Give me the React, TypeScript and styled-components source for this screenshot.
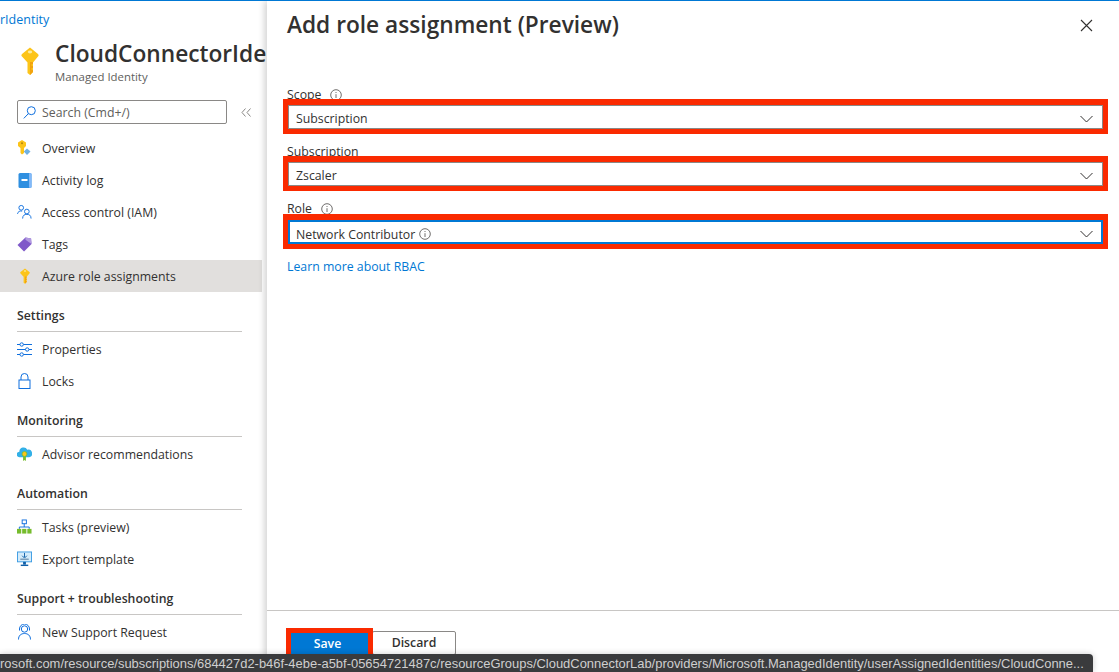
import styled, { createGlobalStyle } from 'styled-components'

const GlobalStyle = createGlobalStyle`
  html, body { margin: 0; padding: 0; background: #fff; }
  #root { height: 672px; }
`
const Page = styled.div`
  position: relative;
  display: flex;
  width: 1119px;
  height: 672px;
  overflow: hidden;
  border-top: 1px solid #0078d4;
  box-sizing: border-box;
  font-family: 'Open Sans', 'Noto Sans', sans-serif;
  color: #323130;
`
const Sidebar = styled.aside`
  width: 267px;
  flex: none;
  overflow: hidden;
  white-space: nowrap;
`
const Crumb = styled.div`
  height: 18px;
  margin-top: 10px;
  font-size: 12.5px;
  line-height: 18px;
  color: #0078d4;
`
const Resource = styled.header`
  display: flex;
  align-items: flex-start;
  gap: 16px;
  padding: 10px 0 0 21px;
  svg {
    flex: none;
    margin-top: 8px;
  }
`
const ResourceText = styled.div`
  display: flex;
  flex-direction: column;
`
const ResourceName = styled.h1`
  margin: 0;
  font-size: 22.7px;
  line-height: 29px;
  font-weight: 600;
  color: #323130;
`
const ResourceKind = styled.span`
  font-size: 11.4px;
  line-height: 18px;
  color: #605e5c;
`
const SearchRow = styled.div`
  display: flex;
  align-items: center;
  gap: 14px;
  padding: 14px 0 8px 17px;
`
const SearchBox = styled.div`
  display: flex;
  align-items: center;
  gap: 6px;
  box-sizing: border-box;
  width: 210px;
  height: 24px;
  padding-left: 5px;
  border: 1px solid #8a8886;
  border-radius: 2px;
  font-size: 12.3px;
  color: #605e5c;
`
const Collapse = styled.span`
  display: flex;
  color: #8a8886;
`
const NavRow = styled.div<{ $active?: boolean }>`
  display: flex;
  align-items: center;
  gap: 10px;
  width: 262px;
  height: 32px;
  box-sizing: border-box;
  padding-left: 17px;
  font-size: 12.3px;
  color: #323130;
  background: ${p => (p.$active ? '#e1dfdd' : 'transparent')};
`
const IconSlot = styled.span`
  display: flex;
  align-items: center;
  justify-content: center;
  width: 15px;
  height: 16px;
  flex: none;
`
const GroupTitle = styled.h2`
  box-sizing: border-box;
  width: 225px;
  height: 29px;
  margin: 11px 0 1px 17px;
  border-bottom: 1px solid #c8c6c4;
  font-size: 12.3px;
  line-height: 26px;
  font-weight: 600;
  color: #323130;
`
const Panel = styled.main`
  flex: 1;
  display: flex;
  flex-direction: column;
  min-width: 0;
  box-shadow: -3px 0 6px rgba(0, 0, 0, 0.16);
  background: #fff;
  z-index: 1;
`
const PanelHead = styled.div`
  display: flex;
  align-items: center;
  justify-content: space-between;
  height: 48px;
  padding: 0 26px 0 20px;
`
const PanelTitle = styled.h2`
  margin: 0;
  font-size: 22.7px;
  line-height: 48px;
  font-weight: 600;
  color: #323130;
`
const Form = styled.div`
  flex: 1;
  display: flex;
  flex-direction: column;
  padding: 33px 11px 0 16px;
`
const FieldLabel = styled.label<{ $top: number }>`
  display: flex;
  align-items: flex-start;
  gap: 9px;
  box-sizing: border-box;
  height: 17px;
  padding: ${p => p.$top}px 0 0 4px;
  font-size: 12.3px;
  line-height: 17px;
  color: #323130;
  svg {
    margin-top: 3px;
  }
`
const Highlight = styled.div<{ $gap: number }>`
  box-sizing: border-box;
  height: 35px;
  margin-bottom: ${p => p.$gap}px;
  border: 5px solid #fa2a00;
  border-top-width: 6px;
  outline: 1px solid rgba(250, 42, 0, 0.4);
  outline-offset: -1px;
`
const Select = styled.div<{ $focused?: boolean }>`
  display: flex;
  align-items: center;
  justify-content: space-between;
  box-sizing: border-box;
  height: 100%;
  padding: ${p => (p.$focused ? '4px' : '3px')} 9px 0 7px;
  border: ${p => (p.$focused ? '1px solid #0078d4' : '1px solid #8a8886')};
  box-shadow: ${p => (p.$focused ? 'inset 0 0 0 1px #0078d4' : 'none')};
  font-size: 12.3px;
  color: #323130;
`
const SelectValue = styled.span`
  display: flex;
  align-items: center;
  gap: 4px;
`
const LearnLink = styled.a`
  margin: 4px 0 0 4px;
  font-size: 12.3px;
  line-height: 18px;
  color: #0078d4;
`
const Footer = styled.footer`
  display: flex;
  align-items: flex-start;
  height: 62px;
  box-sizing: border-box;
  padding: 17px 0 0 19px;
  border-top: 1px solid #c8c6c4;
`
const SaveFrame = styled.div`
  position: relative;
  z-index: 3;
  box-sizing: border-box;
  width: 87px;
  height: 32px;
  border: 5px solid #fa2a00;
`
const SaveButton = styled.button`
  display: block;
  width: 100%;
  height: 100%;
  padding: 0 4px 2px 0;
  border: 0;
  background: #0078d4;
  color: #fff;
  font: 600 12.3px 'Open Sans', sans-serif;
`
const DiscardButton = styled.button`
  width: 84px;
  height: 24px;
  margin: 3px 0 0 -1px;
  padding: 0 0 1px;
  border: 1px solid #8a8886;
  border-radius: 2px;
  background: #fff;
  color: #323130;
  font: 600 12.3px 'Open Sans', sans-serif;
`
const StatusBar = styled.div`
  position: absolute;
  left: 0;
  bottom: 0;
  z-index: 2;
  box-sizing: border-box;
  width: 1093px;
  height: 18px;
  padding-right: 4px;
  border-top-right-radius: 4px;
  background: #3a3b3d;
  box-shadow: 0 0 6px rgba(0, 0, 0, 0.2);
  color: #cfcfcf;
  font-family: 'Liberation Sans', Arial, sans-serif;
  font-size: 12.95px;
  line-height: 20px;
  white-space: nowrap;
  overflow: hidden;
`

const KeyIcon = ({ width = 18, height = 28 }: { width?: number; height?: number }) => (
  <svg width={width} height={height} viewBox="0 0 18 28">
    <path d="M9 0.5 17 7Q18.2 8.3 17 9.6L12 15.5V25L9 28 6.5 26V15.5L1 9.6Q-0.2 8.3 1 7Z" fill="#fcc419" />
    <path d="M9 15H12V17H10.5V19H12V21H10.5V23H12V25L9 28Z" fill="#f2a30f" />
    <ellipse cx="9" cy="5" rx="2.2" ry="1.4" fill="#fdeb9c" />
  </svg>
)
const OverviewIcon = () => (
  <svg width="15" height="16" viewBox="0 0 15 16">
    <path d="M5 0 9 2.5V6L7 8V13L5 14.5 3.5 13V8L1 6V2.5Z" fill="#fcc419" />
    <circle cx="5" cy="3.2" r="1" fill="#b8860b" />
    <path d="M10 8.5 13.5 11.5 10 15 6.8 11.5Z" fill="#6fb1e4" />
  </svg>
)
const LogIcon = () => (
  <svg width="14" height="15" viewBox="0 0 14 15">
    <rect x="0.5" y="0" width="13" height="15" rx="1.5" fill="#2f8fe0" />
    <rect x="11" y="0" width="2.5" height="15" rx="1" fill="#83b9f9" />
    <rect x="3.5" y="6" width="6" height="2" fill="#fff" />
  </svg>
)
const AccessIcon = () => (
  <svg width="16" height="16" viewBox="0 0 16 16" fill="none" stroke="#0f6fde" strokeWidth="1">
    <circle cx="4.5" cy="3.5" r="2.5" />
    <path d="M0.5 10C1 7.5 3 6.5 5.5 7" />
    <circle cx="10.5" cy="7.5" r="2.5" />
    <path d="M6 15C6 11.5 8 10.5 10.5 10.5S15 11.5 15 15" />
  </svg>
)
const TagIcon = () => (
  <svg width="15" height="15" viewBox="0 0 16 16">
    <path d="M0.5 8.5 9 0.5 15 1.5 15.5 7.5 7.5 15.5Z" fill="#7f59c9" />
    <path d="M9 0.5 15 1.5 15.5 7.5 9 3Z" fill="#b19ae0" />
  </svg>
)
const SlidersIcon = () => (
  <svg width="15" height="15" viewBox="0 0 15 15" fill="none" stroke="#0f6fde" strokeWidth="1">
    <path d="M0 2.5H3M6.5 2.5H15M0 7.5H8.5M12 7.5H15M0 12.5H3M6.5 12.5H15" />
    <circle cx="4.7" cy="2.5" r="1.7" />
    <circle cx="10.2" cy="7.5" r="1.7" />
    <circle cx="4.7" cy="12.5" r="1.7" />
  </svg>
)
const LockIcon = () => (
  <svg width="13" height="16" viewBox="0 0 13 16" fill="none" stroke="#0f6fde" strokeWidth="1">
    <rect x="1" y="7" width="11" height="8.5" />
    <path d="M3 7V4a3.5 3.5 0 0 1 7 0v3" />
  </svg>
)
const AdvisorIcon = () => (
  <svg width="16" height="16" viewBox="0 0 16 16">
    <path d="M3 11.5A3 3 0 0 1 2.5 5.5 4.5 4.5 0 0 1 11 3.5 4 4 0 0 1 13 11.5Z" fill="#32b0e7" />
    <path d="M6.5 10.5h3v5l-1.5-1-1.5 1Z" fill="#76bc2d" />
    <circle cx="8" cy="8" r="2.6" fill="#fcc419" stroke="#76bc2d" strokeWidth="0.8" />
  </svg>
)
const TasksIcon = () => (
  <svg width="16" height="16" viewBox="0 0 16 16">
    <rect x="5.5" y="0.5" width="4.5" height="4" fill="#fff" stroke="#0f6fde" />
    <path d="M7.7 4.5V8M2.5 10V8H13V10" stroke="#0f6fde" fill="none" />
    <rect x="0" y="10" width="4.5" height="5" fill="#76bc2d" />
    <rect x="5.5" y="10" width="4.5" height="5" fill="#76bc2d" />
    <rect x="11" y="10" width="4.5" height="5" fill="#76bc2d" />
  </svg>
)
const ExportIcon = () => (
  <svg width="16" height="16" viewBox="0 0 16 16">
    <rect x="0.5" y="0.5" width="15" height="10.5" fill="#d5ecfb" stroke="#3b9be3" />
    <path d="M8 1.5V6M5.5 4.5 8 7 10.5 4.5" stroke="#0f5fa8" fill="none" />
    <rect x="3.5" y="7.5" width="9" height="1.5" fill="#7a9cb8" />
    <rect x="6.5" y="11" width="3" height="3" fill="#0f5fa8" />
    <rect x="4" y="14" width="8" height="1.5" fill="#0f5fa8" />
  </svg>
)
const SupportIcon = () => (
  <svg width="15" height="16" viewBox="0 0 15 16" fill="none" stroke="#0f6fde" strokeWidth="1">
    <circle cx="7.5" cy="5" r="3.2" />
    <path d="M2.5 6.5V5a5 5 0 0 1 10 0v1.5" />
    <path d="M1.5 15.5C1.5 11.5 4 9.5 7.5 9.5s6 2 6 6" />
  </svg>
)
const SearchIcon = () => (
  <svg width="13" height="13" viewBox="0 0 13 13" fill="none" stroke="#0f6fde" strokeWidth="1">
    <circle cx="8.3" cy="4.7" r="4" />
    <path d="M5.4 7.6 0.8 12.4" />
  </svg>
)
const CollapseIcon = () => (
  <svg width="10" height="9" viewBox="0 0 10 9" fill="none" stroke="currentColor" strokeWidth="1">
    <path d="M4.5 0.5 1 4.5 4.5 8.5M9.5 0.5 6 4.5 9.5 8.5" />
  </svg>
)
const InfoIcon = () => (
  <svg width="12" height="12" viewBox="0 0 12 12" fill="none" stroke="#605e5c" strokeWidth="0.9">
    <circle cx="6" cy="6" r="5.3" />
    <path d="M6 5.2V9M6 3V4" />
  </svg>
)
const Chevron = () => (
  <svg width="13" height="8" viewBox="0 0 13 8" fill="none" stroke="#323130" strokeWidth="1">
    <path d="M0.5 1 6.5 7 12.5 1" />
  </svg>
)
const CloseIcon = () => (
  <svg width="13" height="13" viewBox="0 0 13 13" fill="none" stroke="#323130" strokeWidth="1.1">
    <path d="M1 1 12 12M12 1 1 12" />
  </svg>
)

const App = () => {
  return (
    <Page>
      <GlobalStyle />
      <Sidebar>
        <Crumb>rIdentity</Crumb>
        <Resource>
          <KeyIcon />
          <ResourceText>
            <ResourceName>CloudConnectorIde</ResourceName>
            <ResourceKind>Managed Identity</ResourceKind>
          </ResourceText>
        </Resource>
        <SearchRow>
          <SearchBox>
            <SearchIcon />
            Search (Cmd+/)
          </SearchBox>
          <Collapse>
            <CollapseIcon />
          </Collapse>
        </SearchRow>
        <NavRow><IconSlot><OverviewIcon /></IconSlot>Overview</NavRow>
        <NavRow><IconSlot><LogIcon /></IconSlot>Activity log</NavRow>
        <NavRow><IconSlot><AccessIcon /></IconSlot>Access control (IAM)</NavRow>
        <NavRow><IconSlot><TagIcon /></IconSlot>Tags</NavRow>
        <NavRow $active><IconSlot><KeyIcon width={10} height={16} /></IconSlot>Azure role assignments</NavRow>
        <GroupTitle>Settings</GroupTitle>
        <NavRow><IconSlot><SlidersIcon /></IconSlot>Properties</NavRow>
        <NavRow><IconSlot><LockIcon /></IconSlot>Locks</NavRow>
        <GroupTitle>Monitoring</GroupTitle>
        <NavRow><IconSlot><AdvisorIcon /></IconSlot>Advisor recommendations</NavRow>
        <GroupTitle>Automation</GroupTitle>
        <NavRow><IconSlot><TasksIcon /></IconSlot>Tasks (preview)</NavRow>
        <NavRow><IconSlot><ExportIcon /></IconSlot>Export template</NavRow>
        <GroupTitle>Support + troubleshooting</GroupTitle>
        <NavRow><IconSlot><SupportIcon /></IconSlot>New Support Request</NavRow>
      </Sidebar>
      <Panel>
        <PanelHead>
          <PanelTitle>Add role assignment (Preview)</PanelTitle>
          <CloseIcon />
        </PanelHead>
        <Form>
          <FieldLabel $top={4}>Scope <InfoIcon /></FieldLabel>
          <Highlight $gap={5}>
            <Select>
              <SelectValue>Subscription</SelectValue>
              <Chevron />
            </Select>
          </Highlight>
          <FieldLabel $top={4}>Subscription</FieldLabel>
          <Highlight $gap={6}>
            <Select>
              <SelectValue>Zscaler</SelectValue>
              <Chevron />
            </Select>
          </Highlight>
          <FieldLabel $top={3}>Role <InfoIcon /></FieldLabel>
          <Highlight $gap={5}>
            <Select $focused>
              <SelectValue>Network Contributor <InfoIcon /></SelectValue>
              <Chevron />
            </Select>
          </Highlight>
          <LearnLink>Learn more about RBAC</LearnLink>
        </Form>
        <Footer>
          <SaveFrame>
            <SaveButton>Save</SaveButton>
          </SaveFrame>
          <DiscardButton>Discard</DiscardButton>
        </Footer>
      </Panel>
      <StatusBar>rosoft.com/resource/subscriptions/684427d2-b46f-4ebe-a5bf-05654721487c/resourceGroups/CloudConnectorLab/providers/Microsoft.ManagedIdentity/userAssignedIdentities/CloudConne...</StatusBar>
    </Page>
  )
}

export default App
